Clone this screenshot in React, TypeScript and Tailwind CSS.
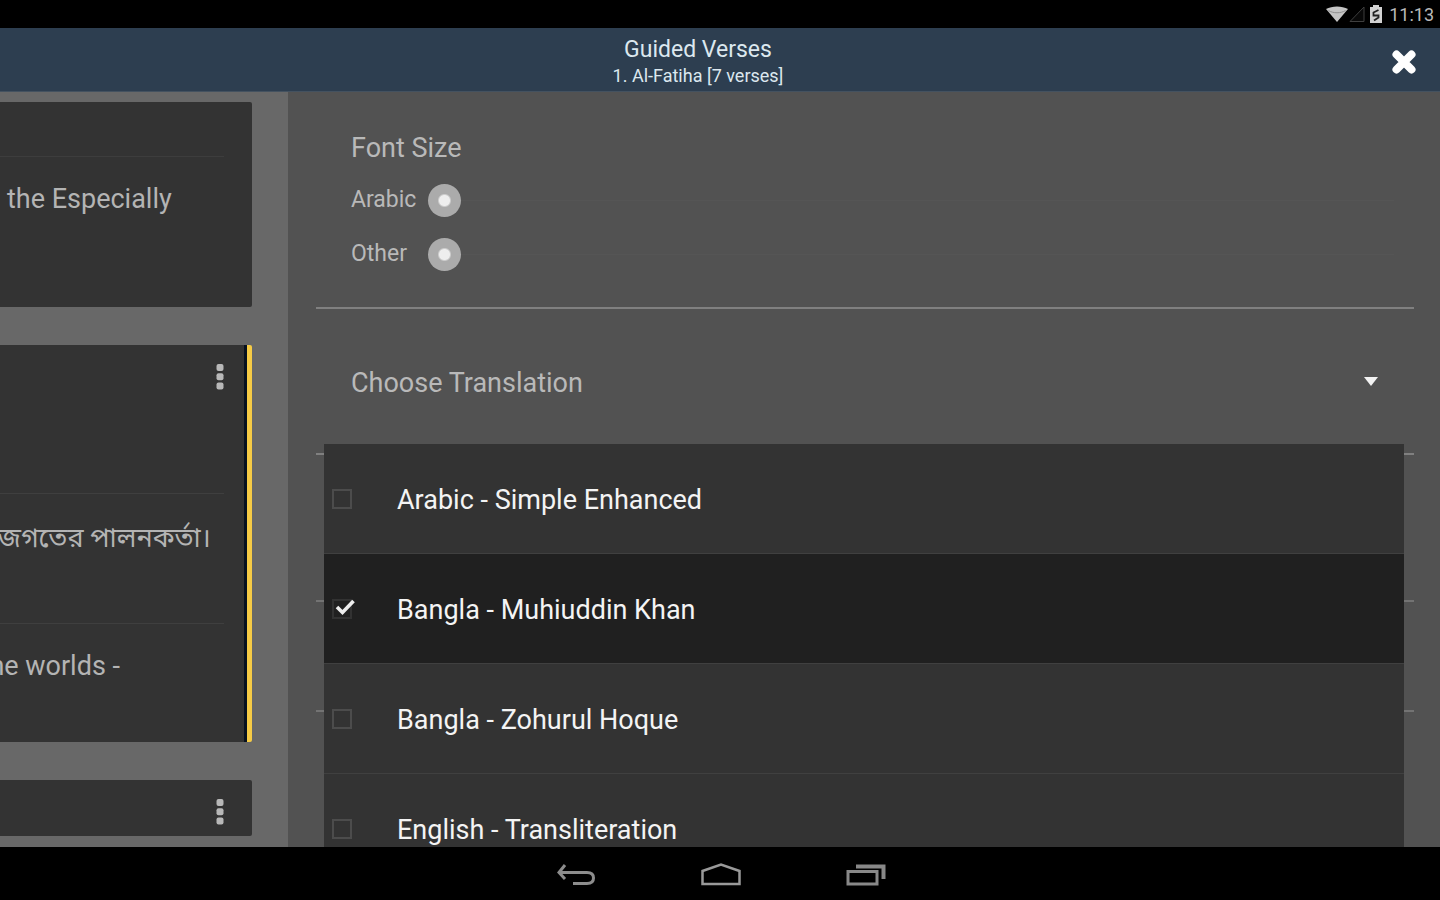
import { useState } from "react";

const translations = [
  "Arabic - Simple Enhanced",
  "Bangla - Muhiuddin Khan",
  "Bangla - Zohurul Hoque",
  "English - Transliteration",
];

function StatusBar() {
  return (
    <div className="flex h-7 shrink-0 items-center justify-end bg-black pr-1.5 text-[#b9b9b9]">
      <svg className="h-4 w-6" viewBox="0 0 24 16" aria-hidden="true">
        <path d="M1 3C7-.5 17-.5 23 3L12 16Z" fill="#c4c4c4" />
        <path d="M3.500 4.500C8 7.500 16 7.500 20.500 4.500" fill="none" stroke="#8f8f8f" />
      </svg>
      <svg className="mr-1 h-4 w-4" viewBox="0 0 16 16" aria-hidden="true">
        <path d="M1 15.500H15V1Z" fill="#080808" stroke="#3f3f3f" />
      </svg>
      <svg className="mr-1.5 h-5 w-3.5" viewBox="0 0 14 20" aria-hidden="true">
        <path d="M4 1h6v2h3v16H1V3h3Z" fill="#d2d2d2" />
        <path d="M9.500 6 4.500 8.500v3h5v2L5 16.500" fill="none" stroke="#222" strokeWidth="1.800" />
      </svg>
      <time className="pt-0.5 text-lg leading-6">11:13</time>
    </div>
  );
}

function Header() {
  return (
    <header className="relative z-10 grid h-16 shrink-0 grid-cols-[1fr_auto_1fr] items-center border-b border-[#445260] bg-[#2d3e50] text-[#dce8ef]">
      <div className="col-start-2 mr-11 pt-1 text-center">
        <h1 className="text-[23px] leading-7">Guided Verses</h1>
        <p className="text-lg leading-6">1. Al-Fatiha [7 verses]</p>
      </div>
      <button type="button" aria-label="Close" className="mt-1 mr-5 justify-self-end p-1">
        <svg className="h-6 w-6" viewBox="0 0 24 24" aria-hidden="true">
          <path d="M4.500 4.500 19.500 19.500M19.500 4.500 4.500 19.500" stroke="#fff" strokeWidth="8" strokeLinecap="round" />
        </svg>
      </button>
    </header>
  );
}

function MoreButton() {
  return (
    <button type="button" aria-label="More options" className="block px-2">
      <svg className="h-7 w-2" viewBox="0 0 8 28" fill="#b8b8b8" aria-hidden="true">
        <rect x="0.500" y="1" width="7" height="7" rx="2" />
        <rect x="0.500" y="10.200" width="7" height="7" rx="2" />
        <rect x="0.500" y="19.400" width="7" height="7" rx="2" />
      </svg>
    </button>
  );
}

function Verses() {
  return (
    <section aria-label="Verses" className="flex w-72 shrink-0 flex-col gap-[38px] overflow-hidden bg-[#686868] pt-2.5 pr-9 text-[27px] leading-8 text-[#b4b4b4]">
      <article className="h-[205px] shrink-0 rounded-r-xs bg-[#333] pt-[54px] pr-7">
        <hr className="border-[#3d3d3d]" />
        <p className="mt-[26px] ml-[7px] whitespace-nowrap">the Especially</p>
      </article>
      <article className="h-[397px] shrink-0 rounded-r-xs border-r-[5px] border-[#f6cb45] bg-[#333] pr-[23px] shadow-[inset_-3px_0_0_#07111f]">
        <div className="flex h-[148px] justify-end pt-[18px]">
          <div className="-mr-2"><MoreButton /></div>
        </div>
        <hr className="border-[#3f3f3f]" />
        <p lang="bn" className="flex h-[129px] justify-end pt-7 pr-[13px] whitespace-nowrap">জগতের পালনকর্তা।</p>
        <hr className="border-[#3f3f3f]" />
        <p className="flex justify-end pt-[26px] pr-[104px] whitespace-nowrap">he worlds -</p>
      </article>
      <article className="flex h-14 shrink-0 items-start justify-end rounded-r-xs bg-[#333] pt-[18px] pr-6">
        <div className="-mr-1"><MoreButton /></div>
      </article>
    </section>
  );
}

function SizeSlider({ id, label }: { id: string; label: string }) {
  return (
    <div className="flex h-[54px] items-center">
      <label htmlFor={id} className="w-[77px] shrink-0 text-[23px] leading-8">{label}</label>
      <input
        id={id}
        type="range"
        defaultValue={0}
        className="h-9 min-w-0 flex-1 appearance-none bg-transparent [&::-webkit-slider-runnable-track]:h-px [&::-webkit-slider-runnable-track]:bg-[#555] [&::-webkit-slider-thumb]:-mt-4 [&::-webkit-slider-thumb]:size-[33px] [&::-webkit-slider-thumb]:appearance-none [&::-webkit-slider-thumb]:rounded-full [&::-webkit-slider-thumb]:bg-[radial-gradient(circle,#eee_5px,#ababab_7px)]"
      />
    </div>
  );
}

function TranslationMenu() {
  const [checked, setChecked] = useState([1]);
  const toggle = (i: number) =>
    setChecked((c) => (c.includes(i) ? c.filter((n) => n !== i) : [...c, i]));

  return (
    <ul className="absolute top-[91px] right-2.5 left-2 bg-[#333] text-[27px] leading-8 text-[#f4f4f4]">
      {translations.map((name, i) => (
        <li key={name} className="border-b border-[#404040]">
          <label className="flex h-[109px] items-center gap-[45px] pl-2 has-checked:bg-[#202020]">
            <span className="relative size-5 shrink-0">
              <input
                type="checkbox"
                checked={checked.includes(i)}
                onChange={() => toggle(i)}
                className="peer block size-5 appearance-none border-2 border-[#4c4c4c] checked:border-[#323232]"
              />
              <svg className="pointer-events-none absolute -top-0.5 left-0.5 hidden h-5 w-6 peer-checked:block" viewBox="0 0 24 20" aria-hidden="true">
                <path d="M3 10 8.500 15.500 19.500 4" fill="none" stroke="#eee" strokeWidth="3.600" />
              </svg>
            </span>
            <span className="pt-[3px]">{name}</span>
          </label>
        </li>
      ))}
    </ul>
  );
}

function Settings() {
  const [open, setOpen] = useState(true);
  return (
    <section aria-label="Settings" className="min-w-0 flex-1 overflow-hidden bg-[#525252] pr-[26px] pl-7 text-[27px] leading-8 text-[#b9b9b9]">
      <div className="h-[215px] pt-10 pr-5 pl-[35px]">
        <h2 className="mb-[9px]">Font Size</h2>
        <SizeSlider id="arabic-size" label="Arabic" />
        <SizeSlider id="other-size" label="Other" />
      </div>
      <hr className="border-t-2 border-[#808080]" />
      <div className="relative mt-11">
        <button type="button" aria-expanded={open} onClick={() => setOpen(!open)} className="flex h-[100px] w-full items-start justify-between pt-3.5 pr-9 pl-[35px] text-left">
          Choose Translation
          <svg className="mt-2.5 h-2.5 w-3.5" viewBox="0 0 14 10" aria-hidden="true">
            <path d="M0 0H14L7 9Z" fill="#f2f2f2" />
          </svg>
        </button>
        <hr className="border-t-2 border-[#808080]" />
        <hr className="mt-[145px] border-t-2 border-[#737373]" />
        <hr className="mt-[108px] border-t-2 border-[#737373]" />
        {open && <TranslationMenu />}
      </div>
    </section>
  );
}

function NavigationBar() {
  return (
    <nav aria-label="System" className="relative z-10 flex h-[53px] shrink-0 items-center justify-center gap-[105px] bg-black pt-0.5 pl-px">
      <button type="button" aria-label="Back">
        <svg className="h-7 w-10" viewBox="0 0 40 28" fill="none" stroke="#8c8c8c" strokeWidth="3" aria-hidden="true">
          <path d="M4 11.500H31Q37.500 11.500 37.500 17T31 22.500H17" />
          <path d="M9 4 3 11.500 9 18" />
        </svg>
      </button>
      <button type="button" aria-label="Home">
        <svg className="h-7 w-10" viewBox="0 0 40 28" fill="none" stroke="#999" strokeWidth="2.500" aria-hidden="true">
          <path d="M1.500 23V10L20 3.500 38.500 10V23Z" />
        </svg>
      </button>
      <button type="button" aria-label="Recent apps">
        <svg className="h-7 w-10" viewBox="0 0 40 28" fill="none" stroke="#888" aria-hidden="true">
          <path d="M2 10.500H31V23H2Z" strokeWidth="3" />
          <path d="M10 5.500H37.500V18" strokeWidth="4" />
        </svg>
      </button>
    </nav>
  );
}

export default function App() {
  return (
    <div className="flex h-screen flex-col overflow-hidden bg-black font-[Roboto,'Noto_Sans_Bengali','Noto_Sans',sans-serif]">
      <StatusBar />
      <Header />
      <main className="flex min-h-0 flex-1">
        <Verses />
        <Settings />
      </main>
      <NavigationBar />
    </div>
  );
}
